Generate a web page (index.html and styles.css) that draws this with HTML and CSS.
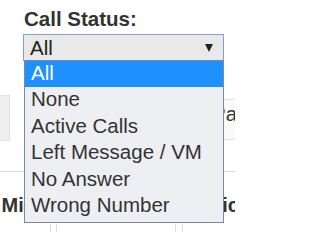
FILE: index.html
```html
<!DOCTYPE html>
<html lang="en">
<head>
<meta charset="utf-8">
<title>Call Status</title>
<link rel="stylesheet" href="styles.css">
</head>
<body>
<div class="page">
  <div class="filter">
    <div class="filter-label">Call Status:</div>
    <div class="select">
      <span class="select-value">All</span>
      <svg class="select-arrow" width="8" height="8" viewBox="0 0 8 8"><polygon points="0,0 8,0 4,8" fill="#222"/></svg>
    </div>
  </div>
  <div class="bar">
    <div class="bar-left"></div>
    <div class="bar-right">Past Calls</div>
  </div>
  <div class="table">
    <div class="thead">
      <div class="th c1">Minutes</div>
      <div class="th c2">Date</div>
      <div class="th c3">Topic</div>
    </div>
    <div class="trow">
      <div class="td c1"></div>
      <div class="td c2"></div>
      <div class="td c3"></div>
    </div>
  </div>
  <ul class="dropdown">
    <li class="option selected">All</li>
    <li class="option">None</li>
    <li class="option">Active Calls</li>
    <li class="option">Left Message / VM</li>
    <li class="option">No Answer</li>
    <li class="option">Wrong Number</li>
  </ul>
</div>
</body>
</html>
```
FILE: styles.css
```css
html, body {
  margin: 0;
  padding: 0;
  background: #ffffff;
}
body {
  width: 235px;
  height: 232px;
  overflow: hidden;
  font-family: "Liberation Sans", Arial, sans-serif;
  color: #333333;
}
.page {
  position: relative;
  width: 235px;
  height: 232px;
  overflow: hidden;
  padding-top: 7px;
  box-sizing: border-box;
}
.filter {
  padding-left: 23px;
}
.filter-label {
  font-weight: bold;
  font-size: 20.5px;
  line-height: 24px;
  padding-left: 1px;
}
.select {
  margin-top: 3px;
  width: 201px;
  height: 27px;
  box-sizing: border-box;
  border: 1px solid #7fa0d0;
  background: #e9e9ea;
  display: flex;
  align-items: flex-start;
  padding: 1px 0 0 6px;
}
.select-value {
  font-size: 20.5px;
  line-height: 24px;
  color: #222222;
}
.select-arrow {
  margin-left: auto;
  margin-right: 10px;
  margin-top: 8px;
  display: block;
}
.bar {
  margin-top: 34px;
  display: flex;
  align-items: flex-start;
  height: 46px;
  overflow: hidden;
}
.bar-left {
  flex: none;
  width: 10px;
  height: 46px;
  box-sizing: border-box;
  background: #efefef;
  border: 1px solid #e3e3e3;
  border-left: none;
}
.bar-right {
  flex: none;
  margin-left: 190px;
  margin-top: 4px;
  height: 41px;
  box-sizing: border-box;
  border-top: 1px solid #e0e0e0;
  border-bottom: 1px solid #e0e0e0;
  border-left: 1px solid #e0e0e0;
  background: #fafafa;
  padding-left: 11px;
  font-size: 20.5px;
  line-height: 28px;
  white-space: nowrap;
  color: #333333;
}
.table {
  margin-top: 30px;
  border-top: 1px solid #dddddd;
}
.thead, .trow {
  display: flex;
}
.thead .c2 { margin-left: 5px; }
.thead .c3 { margin-left: 6px; }
.trow {
  gap: 0;
}
.th {
  font-weight: bold;
  font-size: 20px;
  line-height: 24px;
  padding-top: 21px;
  padding-bottom: 7px;
  white-space: nowrap;
  overflow: hidden;
  box-sizing: border-box;
}
.th.c1 { padding-left: 1.5px; }
.th.c3 { padding-left: 5px; }
.c1 { width: 51px; flex: none; }
.c2 { width: 120px; flex: none; }
.c3 { width: 60px; flex: none; }
.td {
  height: 20px;
  box-sizing: border-box;
}
.td.c1 { border-right: 1px solid #dddddd; }
.td.c2 { margin-left: 5px; border-left: 1px solid #dddddd; border-right: 1px solid #dddddd; }
.td.c3 { margin-left: 6px; border-left: 1px solid #dddddd; }
.dropdown {
  position: absolute;
  left: 24px;
  top: 60px;
  width: 200px;
  box-sizing: border-box;
  margin: 0;
  padding: 0 0 3px 0;
  list-style: none;
  background: #edeff2;
  border: 1px solid #7a8aa3;
}
.option {
  height: 26.4px;
  box-sizing: border-box;
  padding-left: 6px;
  font-size: 20.5px;
  line-height: 23.8px;
  color: #333333;
  white-space: nowrap;
}
.option.selected {
  background: #1e90ff;
  color: #ffffff;
}
```
